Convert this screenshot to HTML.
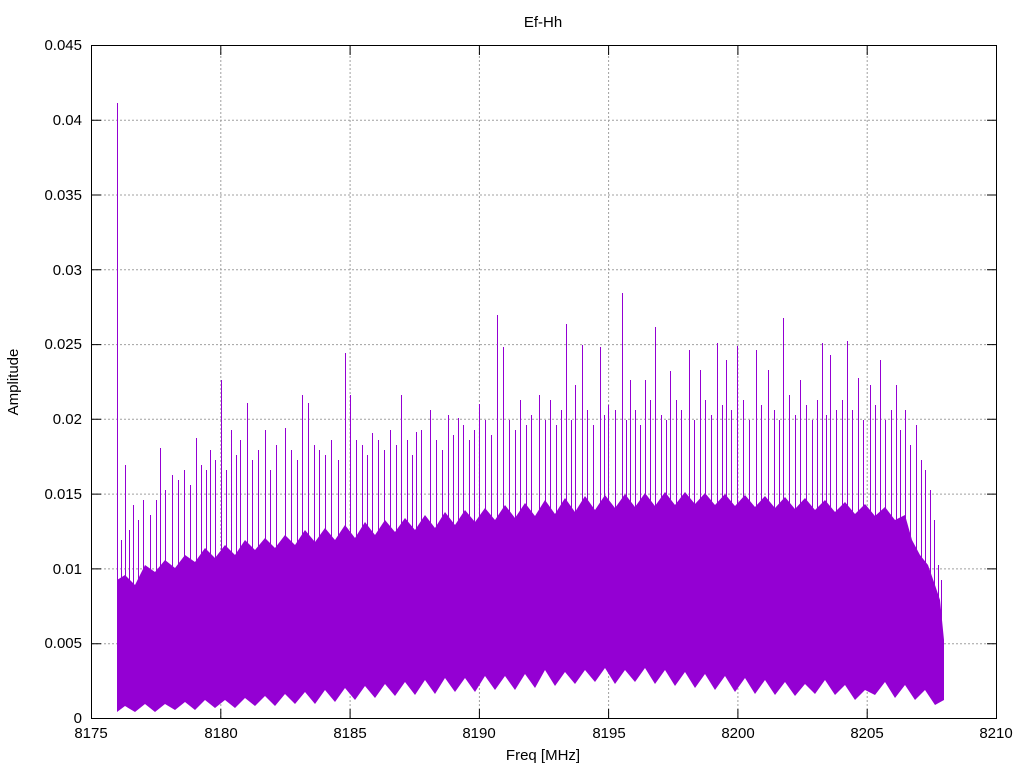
<!DOCTYPE html>
<html><head><meta charset="utf-8"><style>
html,body{margin:0;padding:0;background:#fff;width:1024px;height:768px;overflow:hidden}
svg{display:block}
text{font-family:"Liberation Sans",sans-serif;font-size:15px;fill:#000}
</style></head><body>
<svg id="s" width="1024" height="768" xmlns="http://www.w3.org/2000/svg">
<rect width="1024" height="768" fill="#fff"/>
<g stroke="#a0a0a0" stroke-width="1" stroke-dasharray="2,2" fill="none">
<path d="M220.8 718V46M350.1 718V46M479.4 718V46M608.6 718V46M737.9 718V46M867.2 718V46M92 643.7H996M92 568.9H996M92 494.1H996M92 419.3H996M92 344.6H996M92 269.8H996M92 195H996M92 120.2H996"/>
</g>
<polygon fill="#9400d3" points="117,580 125,575 135,585 145,565 155,572 165,560 175,568 185,555 195,562 205,548 215,558 225,545 235,555 245,540 255,550 265,538 275,548 285,535 295,545 305,530 315,542 325,528 335,540 345,525 355,538 365,522 375,535 385,520 395,532 405,518 415,530 425,515 435,528 445,512 455,525 465,510 475,522 485,508 495,520 505,505 515,518 525,503 535,516 545,500 555,514 565,498 575,512 585,496 595,510 605,495 615,508 625,494 635,507 645,493 655,506 665,492 675,505 685,492 695,504 705,493 715,505 725,494 735,506 745,495 755,507 765,496 775,508 785,497 795,509 805,498 815,510 825,500 835,512 845,502 855,514 865,504 875,516 885,507 895,520 905,515 912,540 920,555 928,565 935,585 940,600 944,640 944,700 935,705 925,690 915,700 905,685 895,698 885,682 875,695 865,690 855,700 845,685 835,695 825,680 815,694 805,684 795,696 785,682 775,695 765,680 755,694 745,678 735,692 725,676 715,690 705,674 695,688 685,672 675,686 665,670 655,684 645,668 635,682 625,670 615,684 605,668 595,682 585,670 575,684 565,672 555,686 545,670 535,688 525,674 515,690 505,676 495,690 485,676 475,692 465,678 455,692 445,678 435,694 425,680 415,695 405,682 395,696 385,684 375,698 365,686 355,700 345,688 335,702 325,690 315,704 305,692 295,704 285,694 275,706 265,696 255,706 245,698 235,708 225,700 215,708 205,700 195,710 185,702 175,710 165,704 155,712 145,704 135,712 125,706 117,712"/>
<path stroke="#9400d3" stroke-width="1" fill="none" shape-rendering="crispEdges" d="M117.5 690V103M125.5 650V465M160.5 600V448M196.5 620V438M221.5 600V380M231.5 560V430M247.5 600V403M265.5 610V430M302.5 590V395M308.5 600V403M345.5 620V353M350.5 590V395M401.5 600V395M430.5 590V410M448.5 600V415M479.5 590V404M497.5 580V315M503.5 580V347M539.5 590V395M566.5 580V324M582.5 590V345M600.5 590V347M608.5 580V405M622.5 585V293M655.5 585V327M689.5 585V350M717.5 585V343M737.5 585V346M756.5 585V350M783.5 585V318M822.5 585V343M847.5 585V341M858.5 585V378M880.5 585V360M896.5 600V385M916.5 600V425M133.5 640V505M143.5 640V500M172.5 630V475M210.5 620V450M240.5 620V440M285.5 610V428M325.5 610V455M372.5 600V433M416.5 600V432M458.5 595V418M520.5 590V400M550.5 590V400M575.5 585V385M630.5 585V380M645.5 585V380M670.5 585V371M700.5 585V370M726.5 585V360M768.5 585V370M800.5 585V380M830.5 585V355M870.5 585V385M905.5 600V410M930.5 620V490M938.5 650V565
M121.5 640V540M129.5 640V530M138.5 640V520M150.5 640V515M156.5 640V500M165.5 640V490M178.5 640V480M184.5 640V470M190.5 640V485M201.5 640V465M206.5 640V470M215.5 640V460M226.5 640V470M236.5 640V455M252.5 640V460M258.5 640V450M270.5 640V470M276.5 640V445M291.5 640V450M297.5 640V460M314.5 640V445M319.5 640V450M331.5 640V440M338.5 640V460M356.5 640V440M362.5 640V445M367.5 640V455M378.5 640V440M384.5 640V450M390.5 640V430M396.5 640V445M407.5 640V440M412.5 640V455M421.5 640V430M436.5 640V440M442.5 640V450M453.5 640V435M463.5 640V425M469.5 640V440M474.5 640V430M485.5 640V420M491.5 640V435M509.5 640V420M515.5 640V430M526.5 640V425M531.5 640V415M545.5 640V420M556.5 640V425M561.5 640V410M571.5 640V420M587.5 640V410M593.5 640V425M604.5 640V415M615.5 640V410M626.5 640V420M635.5 640V410M640.5 640V425M650.5 640V400M661.5 640V415M666.5 640V420M676.5 640V400M681.5 640V410M694.5 640V420M705.5 640V400M711.5 640V415M722.5 640V405M731.5 640V410M743.5 640V400M749.5 640V420M761.5 640V405M774.5 640V410M779.5 640V420M789.5 640V395M795.5 640V415M806.5 640V405M812.5 640V420M817.5 640V400M826.5 640V415M836.5 640V410M842.5 640V400M852.5 640V410M863.5 640V420M875.5 640V405M885.5 640V420M891.5 640V410M900.5 640V430M910.5 640V445M921.5 640V460M925.5 640V470M934.5 650V520M941.5 660V580"/>
<rect x="91.5" y="45.5" width="905" height="673" fill="none" stroke="#000" stroke-width="1"/>
<path stroke="#000" stroke-width="1" d="M91.5 718v-9M91.5 46v9M220.8 718v-9M220.8 46v9M350.1 718v-9M350.1 46v9M479.4 718v-9M479.4 46v9M608.6 718v-9M608.6 46v9M737.9 718v-9M737.9 46v9M867.2 718v-9M867.2 46v9M996.5 718v-9M996.5 46v9M92 718.5h9M996 718.5h-9M92 643.7h9M996 643.7h-9M92 568.9h9M996 568.9h-9M92 494.1h9M996 494.1h-9M92 419.3h9M996 419.3h-9M92 344.6h9M996 344.6h-9M92 269.8h9M996 269.8h-9M92 195h9M996 195h-9M92 120.2h9M996 120.2h-9M92 45.5h9M996 45.5h-9"/>
<g text-anchor="middle">
<text x="91" y="738">8175</text><text x="221" y="738">8180</text><text x="350" y="738">8185</text><text x="479" y="738">8190</text><text x="609" y="738">8195</text><text x="738" y="738">8200</text><text x="867" y="738">8205</text><text x="996" y="738">8210</text>
</g>
<g text-anchor="end">
<text x="82" y="723">0</text><text x="82" y="648">0.005</text><text x="82" y="574">0.01</text><text x="82" y="499">0.015</text><text x="82" y="424">0.02</text><text x="82" y="349">0.025</text><text x="82" y="275">0.03</text><text x="82" y="200">0.035</text><text x="82" y="125">0.04</text><text x="82" y="50">0.045</text>
</g>
<text x="543" y="27" text-anchor="middle">Ef-Hh</text>
<text x="543" y="760" text-anchor="middle">Freq [MHz]</text>
<text transform="translate(18,382) rotate(-90)" text-anchor="middle">Amplitude</text>
</svg>
</body></html>
